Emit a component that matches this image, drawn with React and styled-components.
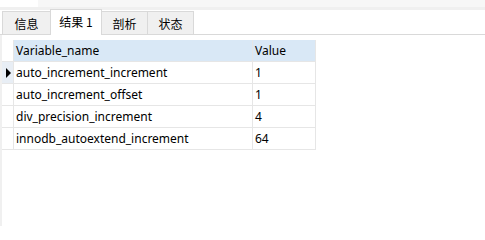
import React from 'react';
import styled, { createGlobalStyle } from 'styled-components';

const GlobalStyle = createGlobalStyle`
  html, body {
    margin: 0;
    padding: 0;
    background: #ffffff;
  }
  body {
    font-family: "Noto Sans", "Noto Sans CJK SC", sans-serif;
    font-size: 12px;
    color: #000;
  }
`;

const Page = styled.div`
  width: 485px;
  height: 226px;
  overflow: hidden;
  display: flex;
  flex-direction: column;
`;

const TopBar = styled.div`
  height: 7px;
  display: flex;
  border-bottom: 3px solid #f0f0f0;
  background: #f7f7f7;
`;

const TopBlock = styled.div`
  width: 38px;
  background: #ffffff;
`;

const TabStrip = styled.div`
  height: 24px;
  display: flex;
  align-items: flex-end;
  padding-left: 2px;
  border-bottom: 1px solid #d9d9d9;
`;

const Tab = styled.div`
  box-sizing: border-box;
  width: ${p => p.$w}px;
  height: ${p => (p.$active ? 26 : 23)}px;
  margin-bottom: ${p => (p.$active ? -1 : 0)}px;
  margin-left: ${p => (p.$first ? 0 : -1)}px;
  background: ${p => (p.$active ? '#ffffff' : '#f0f0f0')};
  border: 1px solid #d9d9d9;
  border-bottom: none;
  position: relative;
  z-index: ${p => (p.$active ? 1 : 0)};
  display: flex;
  align-items: center;
  justify-content: center;
  font-family: "Noto Sans CJK SC", "Noto Sans", sans-serif;
  font-size: 12px;
  padding-bottom: ${p => (p.$active ? 2 : 0)}px;
`;

const Body = styled.div`
  flex: 1;
  display: flex;
  padding-top: 5px;
  border-left: 2px solid #f0f0f0;
`;

const Grid = styled.div`
  display: grid;
  grid-template-columns: 12px 239px 63px;
  grid-auto-rows: 22px;
  align-self: flex-start;
`;

const Cell = styled.div`
  box-sizing: border-box;
  border-right: 1px solid #e6e6e6;
  border-bottom: 1px solid #e6e6e6;
  padding-left: 2px;
  display: flex;
  align-items: center;
  white-space: nowrap;
  background: ${p => (p.$head ? '#d9e8f6' : '#ffffff')};
`;

const Marker = styled.div`
  box-sizing: border-box;
  border-right: 1px solid #e6e6e6;
  border-bottom: 1px solid #e6e6e6;
  display: flex;
  align-items: center;
  justify-content: center;
  background: ${p => (p.$current ? '#e8eef5' : '#ffffff')};
`;

const Arrow = styled.div`
  width: 0;
  height: 0;
  border-top: 5px solid transparent;
  border-bottom: 5px solid transparent;
  border-left: 5px solid #000;
  margin-left: 1px;
`;

const tabs = [
  { label: '信息', w: 49 },
  { label: '结果 1', w: 52, active: true },
  { label: '剖析', w: 47 },
  { label: '状态', w: 47 },
];

const rows = [
  ['auto_increment_increment', '1'],
  ['auto_increment_offset', '1'],
  ['div_precision_increment', '4'],
  ['innodb_autoextend_increment', '64'],
];

export default function App() {
  return (
    <Page>
      <GlobalStyle />
      <TopBar>
        <TopBlock />
      </TopBar>
      <TabStrip>
        {tabs.map((t, i) => (
          <Tab key={t.label} $w={t.w} $active={t.active} $first={i === 0}>
            {t.label}
          </Tab>
        ))}
      </TabStrip>
      <Body>
        <Grid>
          <Marker />
          <Cell $head>Variable_name</Cell>
          <Cell $head>Value</Cell>
          {rows.map((r, i) => (
            <React.Fragment key={r[0]}>
              <Marker $current={i === 0}>{i === 0 && <Arrow />}</Marker>
              <Cell>{r[0]}</Cell>
              <Cell>{r[1]}</Cell>
            </React.Fragment>
          ))}
        </Grid>
      </Body>
    </Page>
  );
}
